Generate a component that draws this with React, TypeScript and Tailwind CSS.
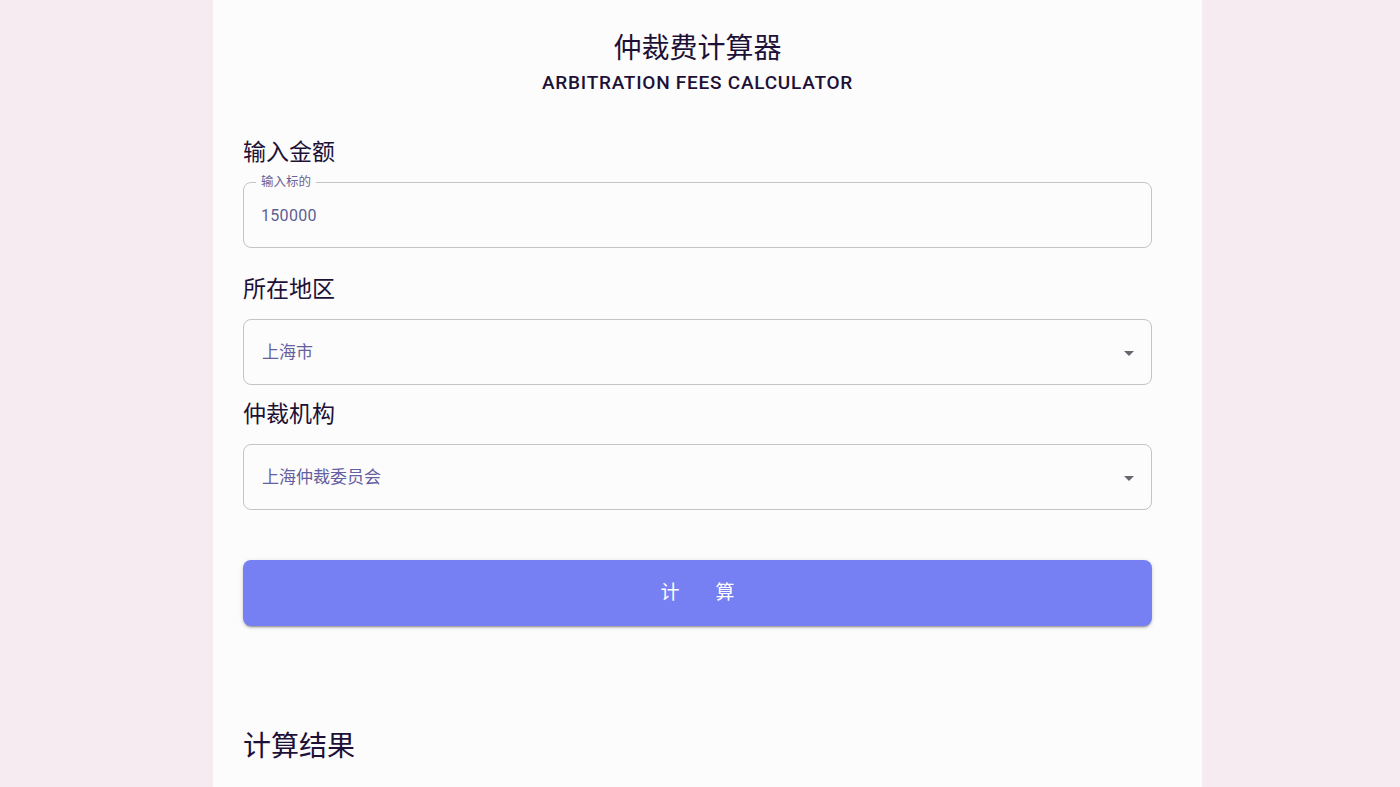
import React from "react";

const FONT = { fontFamily: 'Roboto, "Noto Sans CJK SC", sans-serif' };

function ArrowDrop() {
  return (
    <svg viewBox="0 0 24 24" className="h-6 w-6 fill-[#6b6570]">
      <path d="M7 10l5 5 5-5z" />
    </svg>
  );
}

function SelectBox({ value }: { value: string }) {
  return (
    <div className="mt-[13px] flex h-[66px] items-center justify-between rounded-lg border border-[#c4c4c4] pl-[18px] pr-[10px] pt-[2px]">
      <span className="text-[17px] text-[#655fa0]">{value}</span>
      <ArrowDrop />
    </div>
  );
}

export default function App() {
  return (
    <div className="flex min-h-screen justify-center bg-[#f7ebf2] pl-[15px]" style={FONT}>
      <div className="flex min-h-screen w-[989px] flex-col bg-[#fcfcfc] pb-10 pl-[30px] pr-[50px] pt-[31px] text-[#1d1137]">
        {/* Header */}
        <h1 className="text-center text-[28px] leading-[36px]">仲裁费计算器</h1>
        <p className="mt-[4px] text-center text-[19px] font-medium leading-[24px] tracking-[0.75px]">
          ARBITRATION FEES CALCULATOR
        </p>

        {/* Amount */}
        <h2 className="mt-[42px] text-[23px] leading-[32px]">输入金额</h2>
        <div className="relative mt-[13px] flex h-[66px] items-center rounded-lg border border-[#c4c4c4] px-[17px] pt-[2px]">
          <span className="absolute -top-[9px] left-[12px] bg-[#fcfcfc] px-[5px] text-[12.5px] leading-[16px] text-[#6a6396]">
            输入标的
          </span>
          <input
            defaultValue="150000"
            className="w-full bg-transparent text-[16px] tracking-[0.3px] text-[#5d6092] outline-none"
          />
        </div>

        {/* Region */}
        <h2 className="mt-[26px] text-[23px] leading-[32px]">所在地区</h2>
        <SelectBox value="上海市" />

        {/* Institution */}
        <h2 className="mt-[14px] text-[23px] leading-[32px]">仲裁机构</h2>
        <SelectBox value="上海仲裁委员会" />

        {/* Submit */}
        <button className="mt-[50px] flex h-[66px] items-center justify-center gap-[36px] rounded-lg bg-[#7780f2] text-[19px] text-white shadow-[0_3px_1px_-2px_rgba(0,0,0,0.2),0_2px_2px_0_rgba(0,0,0,0.14),0_1px_5px_0_rgba(0,0,0,0.12)]">
          <span>计</span>
          <span>算</span>
        </button>

        {/* Result */}
        <h2 className="mt-[103px] text-[28px] leading-[36px]">计算结果</h2>
      </div>
    </div>
  );
}
